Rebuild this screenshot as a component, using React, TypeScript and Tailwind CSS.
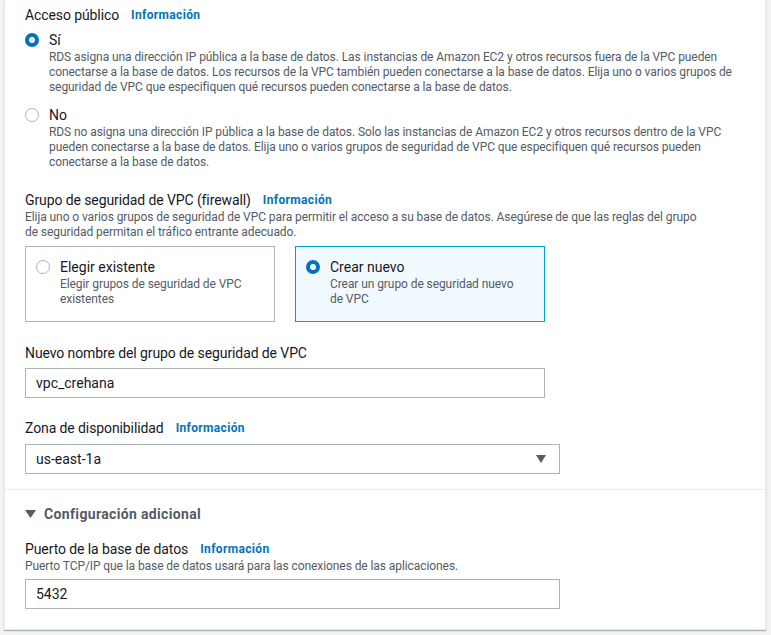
import React from 'react';

const font = { fontFamily: 'Roboto, "Noto Sans", Arial, sans-serif' };

const Info = () => (
  <span className="ml-[12px] text-[12px] font-bold tracking-[0.35px] text-[#0073bb]">Información</span>
);

const Radio = ({ checked }: { checked: boolean }) =>
  checked ? (
    <span className="flex h-[14px] w-[14px] shrink-0 items-center justify-center rounded-full bg-[#0073bb]">
      <span className="h-[6px] w-[6px] rounded-full bg-white" />
    </span>
  ) : (
    <span className="h-[14px] w-[14px] shrink-0 rounded-full border border-[#aab7b8] bg-white" />
  );

const Desc = ({ lines }: { lines: string[] }) => (
  <div className="text-[12px] leading-[15px] tracking-[-0.08px] text-[#545b64] whitespace-nowrap">
    {lines.map((l, i) => (
      <div key={i}>{l}</div>
    ))}
  </div>
);

const Option = ({ checked, label, lines }: { checked: boolean; label: string; lines: string[] }) => (
  <div className="flex flex-col">
    <div className="flex h-[20px] items-center">
      <Radio checked={checked} />
      <span className="ml-[10px] text-[14px] text-[#16191f]">{label}</span>
    </div>
    <div className="pl-[24px]">
      <Desc lines={lines} />
    </div>
  </div>
);

const Tile = ({ checked, label, lines }: { checked: boolean; label: string; lines: string[] }) => (
  <div
    className={`h-[76px] w-[250px] border pl-[10px] pt-[10px] ${
      checked ? 'border-[#00a1c9] bg-[#f1faff]' : 'border-[#aab7b8] bg-white'
    }`}
  >
    <Option checked={checked} label={label} lines={lines} />
  </div>
);

const Field = ({ value, width, select }: { value: string; width: string; select?: boolean }) => (
  <div className={`flex h-[30px] items-center justify-between border border-[#aab7b8] bg-white pl-[10px] pr-[13px] ${width}`}>
    <span className="text-[14px] text-[#16191f]">{value}</span>
    {select && (
      <svg width="10" height="8" viewBox="0 0 10 8">
        <path d="M0 0 H10 L5 8 Z" fill="#545b64" />
      </svg>
    )}
  </div>
);

const Label = ({ text, info }: { text: string; info?: boolean }) => (
  <div className="flex h-[20px] items-center">
    <span className="text-[14px] tracking-[-0.1px] text-[#16191f]">{text}</span>
    {info && <Info />}
  </div>
);

export default function App() {
  return (
    <div className="h-[635px] w-[771px] overflow-hidden bg-[#f2f3f3]" style={font}>
      <div className="ml-[4px] w-[762px] border border-t-0 border-[#eaeded] bg-white shadow-[0_1px_1px_rgba(0,28,36,0.3)]">
        <div className="flex flex-col border-b border-[#eaeded] pb-[15px] pl-[20px] pt-[5px]">
          <Label text="Acceso público" info />
          <div className="mt-[5px]">
            <Option
              checked
              label="Sí"
              lines={[
                'RDS asigna una dirección IP pública a la base de datos. Las instancias de Amazon EC2 y otros recursos fuera de la VPC pueden',
                'conectarse a la base de datos. Los recursos de la VPC también pueden conectarse a la base de datos. Elija uno o varios grupos de',
                'seguridad de VPC que especifiquen qué recursos pueden conectarse a la base de datos.',
              ]}
            />
          </div>
          <div className="mt-[10px]">
            <Option
              checked={false}
              label="No"
              lines={[
                'RDS no asigna una dirección IP pública a la base de datos. Solo las instancias de Amazon EC2 y otros recursos dentro de la VPC',
                'pueden conectarse a la base de datos. Elija uno o varios grupos de seguridad de VPC que especifiquen qué recursos pueden',
                'conectarse a la base de datos.',
              ]}
            />
          </div>
          <div className="mt-[20px]">
            <Label text="Grupo de seguridad de VPC (firewall)" info />
            <Desc
              lines={[
                'Elija uno o varios grupos de seguridad de VPC para permitir el acceso a su base de datos. Asegúrese de que las reglas del grupo',
                'de seguridad permitan el tráfico entrante adecuado.',
              ]}
            />
          </div>
          <div className="mt-[6px] flex gap-[20px]">
            <Tile checked={false} label="Elegir existente" lines={['Elegir grupos de seguridad de VPC', 'existentes']} />
            <Tile checked label="Crear nuevo" lines={['Crear un grupo de seguridad nuevo', 'de VPC']} />
          </div>
          <div className="mt-[21px]">
            <Label text="Nuevo nombre del grupo de seguridad de VPC" />
          </div>
          <div className="mt-[5px]">
            <Field value="vpc_crehana" width="w-[520px]" />
          </div>
          <div className="mt-[20px]">
            <Label text="Zona de disponibilidad" info />
          </div>
          <div className="mt-[6px]">
            <Field value="us-east-1a" width="w-[535px]" select />
          </div>
        </div>
        <div className="flex flex-col pb-[20px] pl-[20px] pt-[14px]">
          <div className="flex h-[20px] items-center">
            <svg width="11" height="8" viewBox="0 0 11 8">
              <path d="M0 0 H11 L5.5 8 Z" fill="#545b64" />
            </svg>
            <span className="ml-[8px] text-[14px] font-bold tracking-[0.35px] text-[#545b64]">Configuración adicional</span>
          </div>
          <div className="mt-[15px]">
            <Label text="Puerto de la base de datos" info />
            <Desc lines={['Puerto TCP/IP que la base de datos usará para las conexiones de las aplicaciones.']} />
          </div>
          <div className="mt-[5px]">
            <Field value="5432" width="w-[535px]" />
          </div>
        </div>
      </div>
    </div>
  );
}
